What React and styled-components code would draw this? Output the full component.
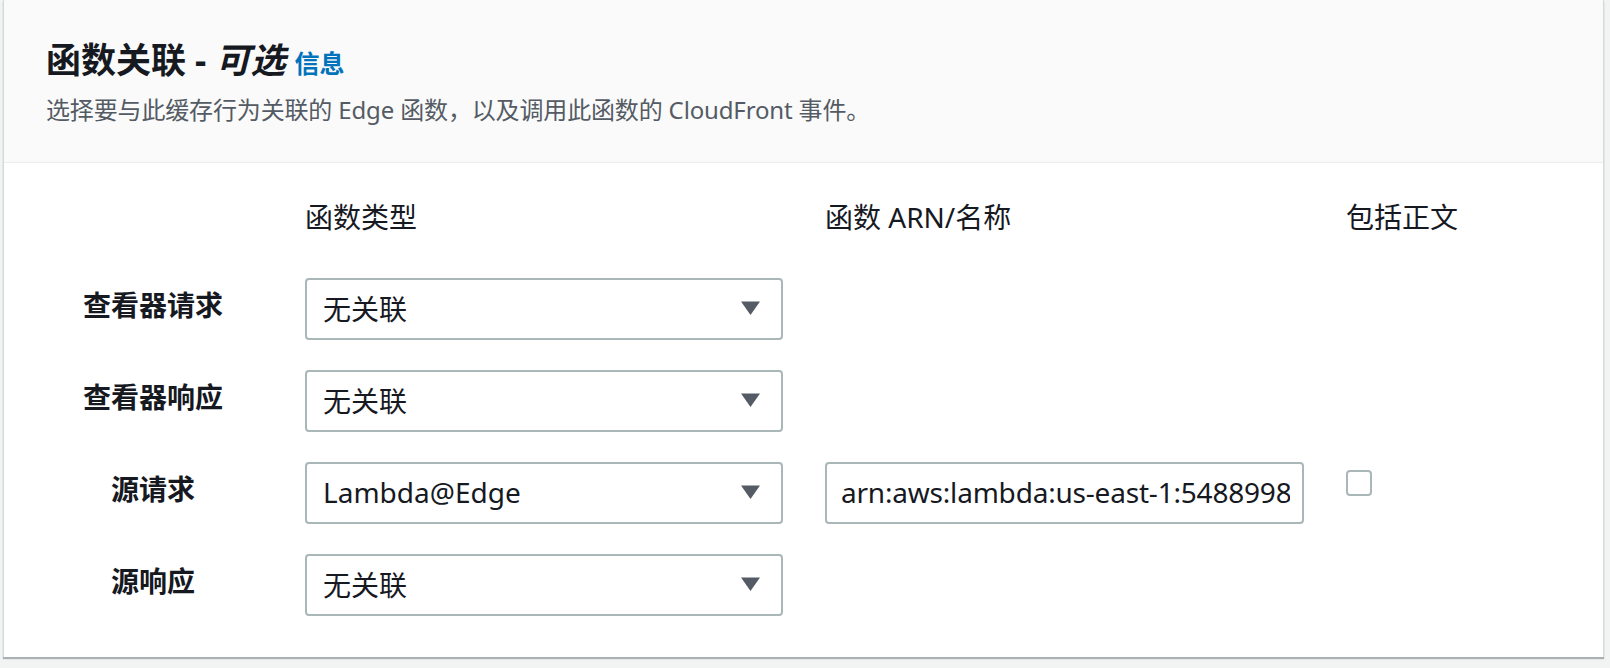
import styled, { createGlobalStyle } from 'styled-components'

const GlobalStyle = createGlobalStyle`
    html, body {
        margin: 0;
        padding: 0;
        background: #f2f3f3;
    }
    body {
        font-family: 'Noto Sans', 'Noto Sans CJK SC', sans-serif;
        color: #16191f;
    }
`

const rows = [
    { label: '查看器请求', type: '无关联' },
    { label: '查看器响应', type: '无关联' },
    { label: '源请求', type: 'Lambda@Edge', arn: 'arn:aws:lambda:us-east-1:548899812345:function:origin-request:1' },
    { label: '源响应', type: '无关联' },
]

function Caret() {
    return (
        <svg width="21" height="16" viewBox="0 0 21 16">
            <path d="M1 1.5 L20 1.5 L10.5 15 Z" fill="#545b64" />
        </svg>
    )
}

function App() {
    return (
        <Page>
            <GlobalStyle />
            <Card>
                <Header>
                    <Title>
                        函数关联 - <Optional>可选</Optional> <InfoLink>信息</InfoLink>
                    </Title>
                    <Description>
                        选择要与此缓存行为关联的 Edge 函数，以及调用此函数的 CloudFront 事件。
                    </Description>
                </Header>
                <Body>
                    <span />
                    <ColumnHead>函数类型</ColumnHead>
                    <ColumnHead>函数 ARN/名称</ColumnHead>
                    <ColumnHead>包括正文</ColumnHead>
                    {rows.map((row) => (
                        <Row key={row.label}>
                            <RowLabel>{row.label}</RowLabel>
                            <SelectBox>
                                <span>{row.type}</span>
                                <Caret />
                            </SelectBox>
                            {row.arn ? <ArnInput defaultValue={row.arn} /> : <span />}
                            {row.arn ? <CheckBox /> : <span />}
                        </Row>
                    ))}
                </Body>
            </Card>
        </Page>
    )
}

export default App

const Page = styled.div`
    padding: 0 6px 10px 3px;
`

const Card = styled.div`
    background: #ffffff;
    border-left: 1px solid #d5dbdb;
    border-right: 1px solid #d5dbdb;
    box-shadow: 0 2px 1px 0 rgba(0, 28, 36, 0.3);
`

const Header = styled.div`
    background: #fafafa;
    border-bottom: 1px solid #eaeded;
    padding: 38px 42px 36px;
`

const Title = styled.h2`
    margin: 0;
    font-size: 35px;
    line-height: 44px;
    font-weight: 700;
    color: #16191f;
`

const Optional = styled.i`
    font-style: italic;
`

const InfoLink = styled.a`
    font-size: 25px;
    font-weight: 700;
    color: #0073bb;
    cursor: pointer;
`

const Description = styled.p`
    margin: 9px 0 0;
    font-size: 24px;
    line-height: 32px;
    letter-spacing: -0.15px;
    color: #545b64;
`

const Body = styled.div`
    display: grid;
    grid-template-columns: 220px 478px 479px auto;
    column-gap: 42px;
    row-gap: 30px;
    padding: 35px 0 41px 39px;
`

const ColumnHead = styled.div`
    font-size: 28px;
    line-height: 38px;
    padding-bottom: 12px;
    white-space: nowrap;
`

const Row = styled.div`
    display: contents;
`

const RowLabel = styled.div`
    font-size: 28px;
    font-weight: 700;
    line-height: 38px;
    padding-top: 8px;
    text-align: center;
`

const SelectBox = styled.div`
    display: flex;
    align-items: center;
    justify-content: space-between;
    box-sizing: border-box;
    height: 62px;
    padding: 0 20px 2px 16px;
    border: 2px solid #aab7b8;
    border-radius: 4px;
    font-size: 28px;
    color: #16191f;
    background: #ffffff;
`

const ArnInput = styled.input`
    box-sizing: border-box;
    width: 100%;
    height: 62px;
    padding: 0 12px 2px 14px;
    border: 2px solid #aab7b8;
    border-radius: 4px;
    font-family: 'Noto Sans', 'Noto Sans CJK SC', sans-serif;
    font-size: 28px;
    letter-spacing: -0.2px;
    color: #16191f;
    outline: none;
`

const CheckBox = styled.span`
    display: block;
    width: 26px;
    height: 26px;
    margin-top: 8px;
    box-sizing: border-box;
    border: 2px solid #aab7b8;
    border-radius: 4px;
    background: #ffffff;
`
